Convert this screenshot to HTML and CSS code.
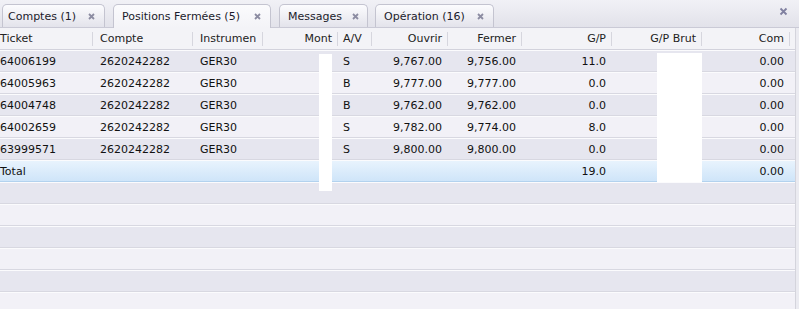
FILE: index.html
```html
<!DOCTYPE html>
<html lang="fr">
<head>
  <meta charset="UTF-8">
  <link rel="stylesheet" href="styles.css">
  <title>Positions Fermées</title>
</head>
<body>
  <div class="panel">
    <!-- Tabs -->
    <div class="tabbar">
      <div class="tab tab-comptes">Comptes (1)<span class="close"><svg width="7" height="7" viewBox="0 0 7 7"><path d="M1 1L6 6M6 1L1 6"/></svg></span></div>
      <div class="tab tab-positions active">Positions Fermées (5)<span class="close"><svg width="7" height="7" viewBox="0 0 7 7"><path d="M1 1L6 6M6 1L1 6"/></svg></span></div>
      <div class="tab tab-messages">Messages<span class="close"><svg width="7" height="7" viewBox="0 0 7 7"><path d="M1 1L6 6M6 1L1 6"/></svg></span></div>
      <div class="tab tab-operation">Opération (16)<span class="close"><svg width="7" height="7" viewBox="0 0 7 7"><path d="M1 1L6 6M6 1L1 6"/></svg></span></div>
      <span class="panel-close"><svg width="9" height="9" viewBox="0 0 9 9"><path d="M1.5 1.5L7.5 7.5M7.5 1.5L1.5 7.5"/></svg></span>
    </div>

    <!-- Grid -->
    <div class="grid">
      <table class="positions">
        <colgroup>
          <col style="width:93px"><col style="width:100px"><col style="width:70px">
          <col style="width:75px"><col style="width:34px"><col style="width:76px">
          <col style="width:74px"><col style="width:90px"><col style="width:90px">
          <col style="width:88px"><col style="width:5px">
        </colgroup>
        <thead>
          <tr>
            <th class="first">Ticket</th>
            <th>Compte</th>
            <th>Instrumen</th>
            <th class="num">Mont</th>
            <th class="av">A/V</th>
            <th class="num">Ouvrir</th>
            <th class="num">Fermer</th>
            <th class="num">G/P</th>
            <th class="num">G/P Brut</th>
            <th class="num">Com</th>
            <th class="filler"></th>
          </tr>
        </thead>
        <tbody>
          <tr>
            <td class="first">64006199</td><td>2620242282</td><td>GER30</td><td class="num"></td><td class="av">S</td>
            <td class="num">9,767.00</td><td class="num">9,756.00</td><td class="num">11.0</td><td class="num"></td><td class="num">0.00</td><td></td>
          </tr>
          <tr>
            <td class="first">64005963</td><td>2620242282</td><td>GER30</td><td class="num"></td><td class="av">B</td>
            <td class="num">9,777.00</td><td class="num">9,777.00</td><td class="num">0.0</td><td class="num"></td><td class="num">0.00</td><td></td>
          </tr>
          <tr>
            <td class="first">64004748</td><td>2620242282</td><td>GER30</td><td class="num"></td><td class="av">B</td>
            <td class="num">9,762.00</td><td class="num">9,762.00</td><td class="num">0.0</td><td class="num"></td><td class="num">0.00</td><td></td>
          </tr>
          <tr>
            <td class="first">64002659</td><td>2620242282</td><td>GER30</td><td class="num"></td><td class="av">S</td>
            <td class="num">9,782.00</td><td class="num">9,774.00</td><td class="num">8.0</td><td class="num"></td><td class="num">0.00</td><td></td>
          </tr>
          <tr>
            <td class="first">63999571</td><td>2620242282</td><td>GER30</td><td class="num"></td><td class="av">S</td>
            <td class="num">9,800.00</td><td class="num">9,800.00</td><td class="num">0.0</td><td class="num"></td><td class="num">0.00</td><td></td>
          </tr>
          <tr class="total">
            <td class="first">Total</td><td></td><td></td><td></td><td></td>
            <td></td><td></td><td class="num">19.0</td><td></td><td class="num">0.00</td><td></td>
          </tr>
          <tr class="empty"><td colspan="11"></td></tr>
          <tr class="empty"><td colspan="11"></td></tr>
          <tr class="empty"><td colspan="11"></td></tr>
          <tr class="empty"><td colspan="11"></td></tr>
          <tr class="empty"><td colspan="11"></td></tr>
          <tr class="empty"><td colspan="11"></td></tr>
        </tbody>
      </table>

      <!-- hidden values -->
      <div class="mask mask-mont"></div>
      <div class="mask mask-brut"></div>
    </div>
  </div>
</body>
</html>
```

FILE: styles.css
```css
body {
  margin: 0;
  padding: 0;
  font-family: "DejaVu Sans", Verdana, sans-serif;
  font-size: 11px;
  color: #111;
  background: #ebebf1;
  overflow: hidden;
}

.panel {
  width: 799px;
  height: 309px;
  overflow: hidden;
}

/* Tabs */
.tabbar {
  height: 27px;
  display: flex;
  align-items: flex-end;
  gap: 8px;
  padding-left: 2px;
  border-bottom: 1px solid #cacad6;
  background: linear-gradient(#f1f1f6, #e2e2ea);
  position: relative;
}

.tab {
  box-sizing: border-box;
  height: 23px;
  display: flex;
  align-items: center;
  justify-content: space-between;
  padding: 0 9px 0 8px;
  border: 1px solid #c4c4d0;
  border-bottom: none;
  border-radius: 5px 5px 0 0;
  background: linear-gradient(#fcfcfe, #e3e3eb);
  color: #1b1b2b;
  white-space: nowrap;
}

.tab-comptes { width: 103px; padding-left: 5px; }
.tab-positions { width: 158px; }
.tab-messages { width: 89px; }
.tab-operation { width: 119px; margin-left: -1px; }

.tab.active {
  height: 24px;
  margin-bottom: -1px;
  background: linear-gradient(#fbfbfd, #f3f3f7);
}

.close {
  display: flex;
  margin-left: 10px;
}

.close svg path {
  stroke: #8c8ca2;
  stroke-width: 1.8;
}

.panel-close {
  position: absolute;
  right: 11px;
  top: 7px;
  display: flex;
}

.panel-close svg path {
  stroke: #8080a0;
  stroke-width: 1.8;
}

/* Grid */
.grid {
  position: relative;
}

.positions {
  table-layout: fixed;
  width: 796px;
  border-collapse: separate;
  border-spacing: 0;
  border-right: 1px solid #d4d4dc;
}

.positions th {
  height: 21px;
  padding: 0 6px 0 7px;
  font-weight: normal;
  text-align: left;
  color: #222;
  background: #f3f3f7 linear-gradient(#d6d6de, #d6d6de) right center / 1px 14px no-repeat;
  border-bottom: 1px solid #d2d2dc;
  white-space: nowrap;
  overflow: hidden;
}

.positions th.filler {
  background: #f3f3f7;
  padding: 0;
}

.positions td {
  height: 20px;
  padding: 0 6px 0 7px;
  border-top: 1px solid #fbfbfd;
  border-bottom: 1px solid #d8d8e1;
  white-space: nowrap;
  overflow: hidden;
}

.positions .first {
  padding-left: 0;
}

.positions .num {
  text-align: right;
}

.positions .av {
  padding-left: 5px;
}

.positions tbody tr:nth-child(odd) td {
  background: #e6e6ef;
}

.positions tbody tr:nth-child(even) td {
  background: #f2f1f7;
}

.positions tbody tr.total td {
  background: linear-gradient(#e8f3fd, #cfe5f9);
  border-bottom-color: #b3d2ee;
}

.mask {
  position: absolute;
  background: #fff;
}

.mask-mont {
  left: 319px;
  top: 26px;
  width: 13px;
  height: 137px;
}

.mask-brut {
  left: 657px;
  top: 25px;
  width: 45px;
  height: 129px;
}
```
